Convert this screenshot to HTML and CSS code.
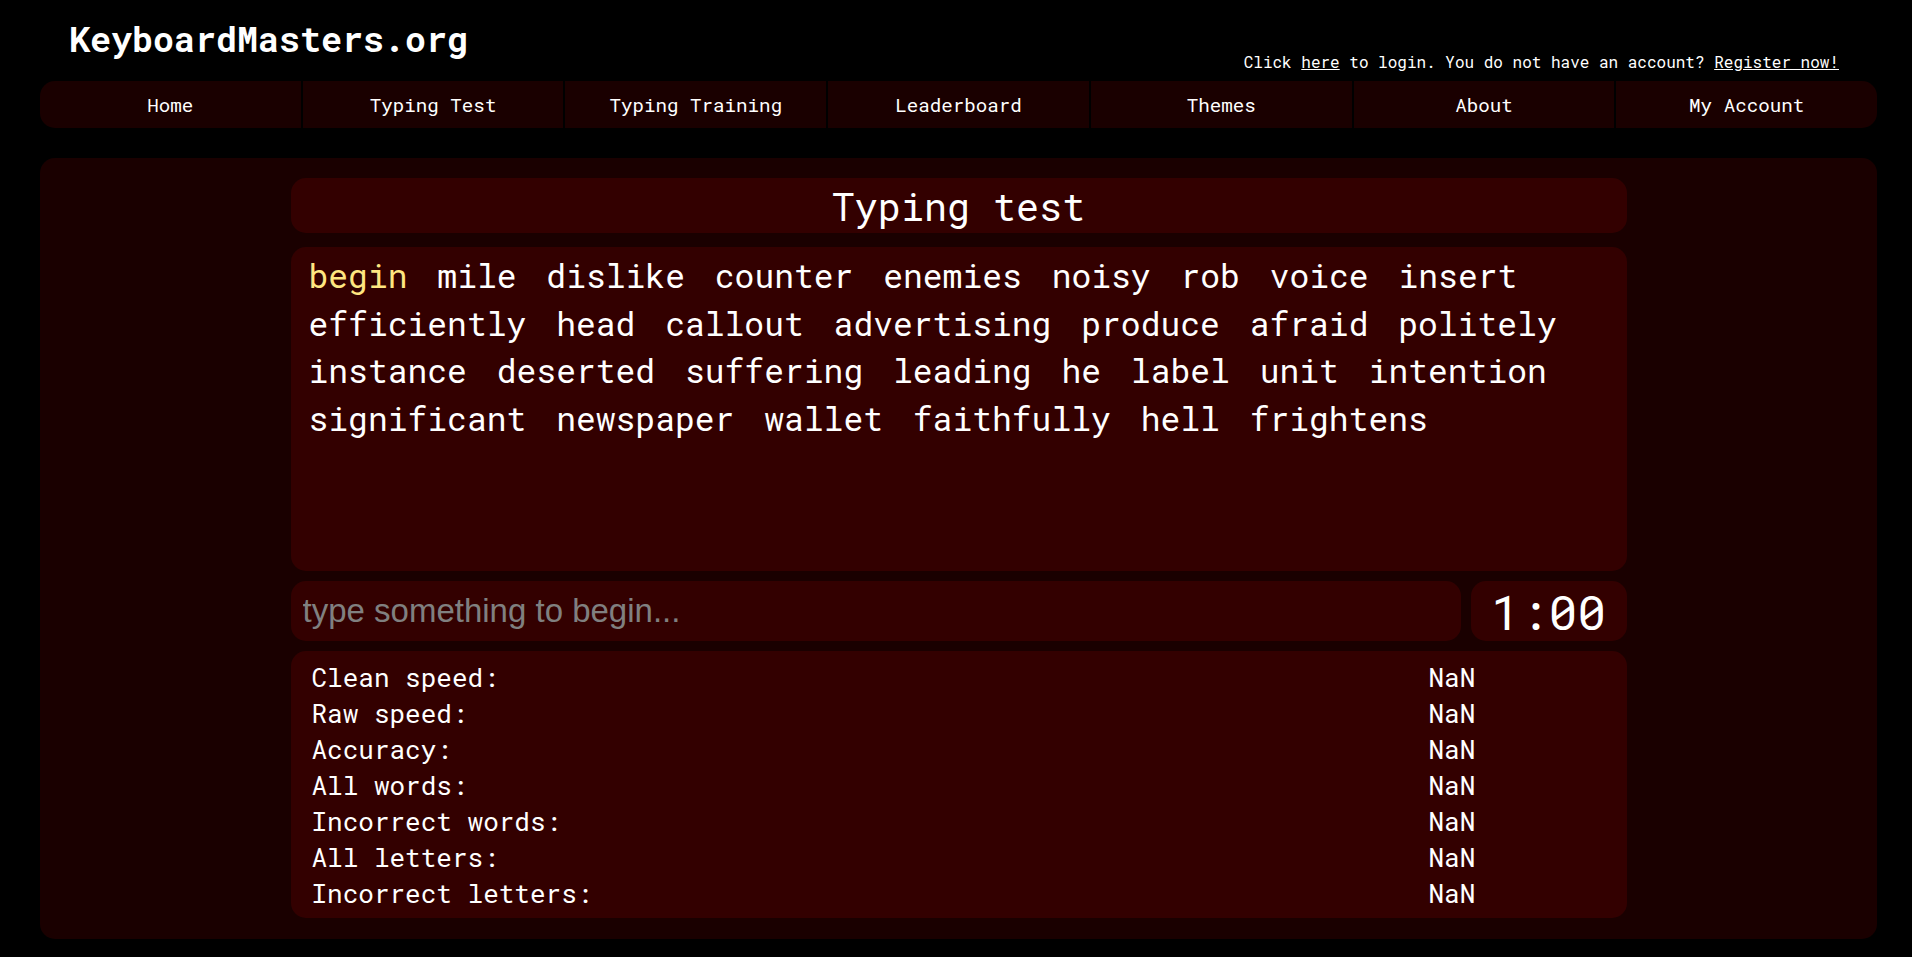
FILE: index.html
```html
<!DOCTYPE html>
<html lang="en">
<head>
<meta charset="utf-8">
<title>KeyboardMasters.org - Typing test</title>
<link rel="stylesheet" href="styles.css">
</head>
<body>
<div class="page">
  <header class="header">
    <div class="brand">KeyboardMasters.org</div>
    <div class="login">Click <a href="#">here</a> to login. You do not have an account? <a href="#">Register now!</a></div>
  </header>
  <nav class="nav">
    <a class="nav-item" href="#">Home</a>
    <a class="nav-item" href="#">Typing Test</a>
    <a class="nav-item" href="#">Typing Training</a>
    <a class="nav-item" href="#">Leaderboard</a>
    <a class="nav-item" href="#">Themes</a>
    <a class="nav-item" href="#">About</a>
    <a class="nav-item" href="#">My Account</a>
  </nav>
  <main class="main">
    <section class="test">
      <h1 class="test-title">Typing test</h1>
      <div class="words"><span class="current">begin</span> mile dislike counter enemies noisy rob voice insert efficiently head callout advertising produce afraid politely instance deserted suffering leading he label unit intention significant newspaper wallet faithfully hell frightens</div>
      <div class="input-row">
        <input class="type-input" type="text" placeholder="type something to begin...">
        <div class="timer">1:00</div>
      </div>
      <div class="stats">
        <div class="stat-label">Clean speed:</div><div class="stat-value">NaN</div>
        <div class="stat-label">Raw speed:</div><div class="stat-value">NaN</div>
        <div class="stat-label">Accuracy:</div><div class="stat-value">NaN</div>
        <div class="stat-label">All words:</div><div class="stat-value">NaN</div>
        <div class="stat-label">Incorrect words:</div><div class="stat-value">NaN</div>
        <div class="stat-label">All letters:</div><div class="stat-value">NaN</div>
        <div class="stat-label">Incorrect letters:</div><div class="stat-value">NaN</div>
      </div>
    </section>
  </main>
</div>
</body>
</html>
```

FILE: styles.css
```css
html, body {
  margin: 0;
  padding: 0;
  background: #000;
  color: #fff;
  font-family: "Roboto Mono", "DejaVu Sans Mono", monospace;
}

.page {
  padding: 0 35px 0 40px;
}

.header {
  display: flex;
  justify-content: space-between;
  align-items: flex-end;
  height: 81px;
}

.brand {
  font-size: 35px;
  font-weight: 700;
  line-height: 40px;
  padding-left: 29px;
  margin-bottom: 23px;
}

.login {
  font-size: 16px;
  line-height: 20px;
  padding-right: 38px;
  margin-bottom: 9px;
}

.login a {
  color: #fff;
  text-decoration: underline;
}

.nav {
  display: flex;
  height: 47px;
  background: #1a0000;
  border-radius: 15px;
  overflow: hidden;
}

.nav-item {
  flex: 1 1 0;
  box-sizing: border-box;
  text-align: center;
  line-height: 47px;
  font-size: 19.2px;
  color: #fff;
  text-decoration: none;
  border-left: 2px solid #000;
}

.nav-item:first-child {
  border-left: 0;
}

.main {
  margin-top: 30px;
  background: #1a0000;
  border-radius: 15px;
  padding: 20px 0 21px;
}

.test {
  width: 1336px;
  margin: 0 auto;
  display: flex;
  flex-direction: column;
}

.test-title {
  margin: 0 0 14px;
  height: 55px;
  box-sizing: border-box;
  padding-top: 1px;
  background: #330000;
  border-radius: 15px;
  text-align: center;
  font-size: 38.4px;
  font-weight: 400;
  line-height: 55px;
  overflow: hidden;
}

.words {
  height: 324px;
  box-sizing: border-box;
  padding: 5px 15px 6px 18px;
  background: #330000;
  border-radius: 15px;
  font-size: 33px;
  line-height: 47.5px;
  word-spacing: 10px;
}

.current {
  color: #ffe680;
}

.input-row {
  display: flex;
  gap: 10px;
  margin-top: 10px;
  height: 60px;
}

.type-input {
  flex: 1;
  min-width: 0;
  margin: 0;
  background: #330000;
  border: 0;
  border-radius: 15px;
  padding: 0 10px 0 12px;
  font-family: "Liberation Sans", Arial, sans-serif;
  font-size: 33px;
  color: #fff;
  outline: none;
}

.type-input::placeholder {
  color: #808080;
}

.timer {
  width: 156px;
  background: #330000;
  border-radius: 15px;
  font-size: 48px;
  display: flex;
  align-items: center;
  justify-content: center;
}

.stats {
  margin-top: 10px;
  background: #330000;
  border-radius: 15px;
  padding: 8px 20px 7px 21px;
  display: grid;
  grid-template-columns: 1117px 1fr;
  font-size: 26px;
  line-height: 36px;
}
```
